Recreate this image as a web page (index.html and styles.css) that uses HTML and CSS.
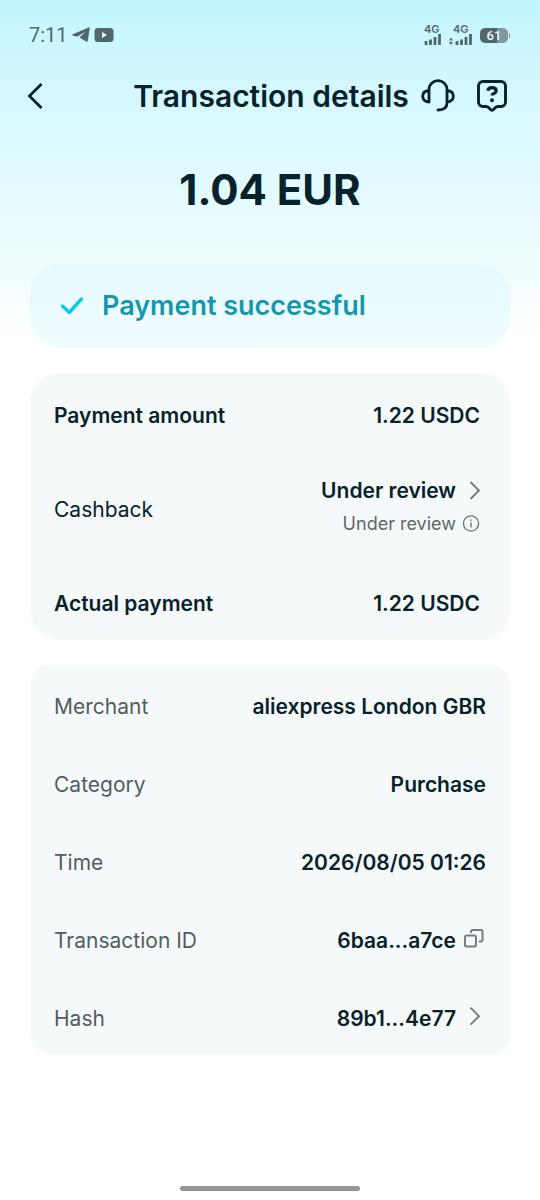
FILE: index.html
```html
<!DOCTYPE html>
<html lang="en">
<head>
  <meta charset="utf-8">
  <meta name="viewport" content="width=device-width, initial-scale=1">
  <title>Transaction details</title>
  <link rel="stylesheet" href="styles.css">
</head>
<body>
  <div class="screen">
    <div class="status">
      <div class="status-group">
        <span class="clock">7:11</span>
        <svg width="18" height="16" viewBox="0 0 18 16" aria-hidden="true"><path d="M16.600.5c.8-.4 1.200 0 1.100.7l-1.900 12.500c-.2 1-.8 1.400-1.600.9L8.300 11c-.5-.3-.5-.8 0-1.300L13.500 4.500 6 9.300c-.6.4-1.200.4-1.800.2L.8 8.500C0 8.200 0 7.600.8 7.200z" fill="#52676c"/></svg>
        <svg width="20" height="14" viewBox="0 0 20 14" aria-hidden="true"><rect width="19" height="14" x=".5" rx="3.500" fill="#52676c"/><path d="m8 4 5 3-5 3z" fill="#dffaff"/></svg>
      </div>
      <div class="status-group status-right">
        <div class="signal">
          <span class="net">4G</span>
          <svg width="17" height="11" viewBox="0 0 17 11" aria-hidden="true"><path d="M2 7v4M6.500 5.500V11M11 3v8M15.500 0v11" stroke="#52676c" stroke-width="2.800"/></svg>
        </div>
        <div class="signal">
          <span class="net">4G</span>
          <svg width="23" height="11" viewBox="0 0 23 11" aria-hidden="true"><path d="m0 6.500 2-3 2 3zM0 8l2 3 2-3z" fill="#52676c"/><path d="M8 7v4M12.500 5.500V11M17 3v8M21.500 0v11" stroke="#52676c" stroke-width="2.800"/></svg>
        </div>
        <div class="battery"><span class="battery-level">61</span></div>
      </div>
    </div>

    <header class="header">
      <div class="side">
        <button class="icon-button" type="button" aria-label="Back">
          <svg width="24" height="30" viewBox="0 0 24 30" fill="none" stroke="#07222a" stroke-width="2.800"><path d="M11.500 3-.5 15l12 12"/></svg>
        </button>
      </div>
      <h1 class="title">Transaction details</h1>
      <div class="side side-right">
        <button class="icon-button" type="button" aria-label="Support">
          <svg width="34" height="34" viewBox="0 0 34 34" fill="none" stroke="#07222a" stroke-width="2.800" stroke-linecap="round" stroke-linejoin="round"><path d="M8 23V10.500a9 8.800 0 0 1 18 0V24c0 4.500-3 7-9 7M8 11.500c-4 .3-6.300 2.500-6.300 5.800S4 22.700 8 23M26 11.500c4 .3 6.300 2.500 6.300 5.800S30 22.700 26 23"/></svg>
        </button>
        <button class="icon-button" type="button" aria-label="Help">
          <svg width="30" height="32" viewBox="0 0 30 32" fill="none" stroke="#07222a" stroke-width="2.900" stroke-linejoin="round" stroke-linecap="round"><path d="M6 1.500h18A4.500 4.500 0 0 1 28.500 6v16a4.500 4.500 0 0 1-4.500 4.500h-3.500c-2.500 0-3.500 3.800-5.500 3.800s-3-3.800-5.500-3.800H6A4.500 4.500 0 0 1 1.500 22V6A4.500 4.500 0 0 1 6 1.500z"/><path d="M10.800 10.800C11.200 8.700 12.800 7.700 15 7.700c2.500 0 4.200 1.200 4.200 3.300 0 2.700-4.200 2.300-4.200 4.600" stroke-linecap="butt" stroke-width="3.200"/><circle cx="15" cy="20.200" r="2" fill="#07222a" stroke="none"/></svg>
        </button>
      </div>
    </header>

    <main class="content">
      <p class="amount">1.04 EUR</p>

      <div class="banner" role="status">
        <svg width="24" height="20" viewBox="0 0 24 20" fill="none" stroke="#10cbe0" stroke-width="3.400" stroke-linecap="round" stroke-linejoin="round" aria-hidden="true"><path d="m2.500 10 6.800 6.500L21.500 3"/></svg>
        <span>Payment successful</span>
      </div>

      <dl class="card card-payment">
        <div class="row strong"><dt>Payment amount</dt><dd>1.22 USDC</dd></div>
        <div class="row row-cashback">
          <dt>Cashback</dt>
          <dd class="stack">
            <button class="link" type="button">Under review
              <svg width="18" height="20" viewBox="0 0 18 20" fill="none" stroke="#6e797c" stroke-width="1.800"><path d="m8.500 1 8.500 8.500L8.500 18"/></svg>
            </button>
            <button class="link note" type="button">Under review
              <svg width="18" height="18" viewBox="0 0 18 18" fill="none" stroke="#6e797c" stroke-width="1.400"><circle cx="9" cy="8.500" r="7.600"/><path d="M9 7.300v5.200M9 4.500V6"/></svg>
            </button>
          </dd>
        </div>
        <div class="row strong"><dt>Actual payment</dt><dd>1.22 USDC</dd></div>
      </dl>

      <dl class="card card-info">
        <div class="row"><dt>Merchant</dt><dd>aliexpress London GBR</dd></div>
        <div class="row"><dt>Category</dt><dd>Purchase</dd></div>
        <div class="row"><dt>Time</dt><dd>2026/08/05 01:26</dd></div>
        <div class="row">
          <dt>Transaction ID</dt>
          <dd><button class="link" type="button">6baa...a7ce
            <svg width="24" height="24" viewBox="0 0 24 24" fill="none" stroke="#748083" stroke-width="2" stroke-linejoin="round"><rect x="3" y="6.500" width="11" height="11" rx="1.800"/><path d="M9 4V2.500A1.500 1.500 0 0 1 10.500 1H19a1.500 1.500 0 0 1 1.500 1.500V11a1.500 1.500 0 0 1-1.500 1.500h-2"/></svg>
          </button></dd>
        </div>
        <div class="row">
          <dt>Hash</dt>
          <dd><button class="link" type="button">89b1...4e77
            <svg width="24" height="24" viewBox="0 0 24 24" fill="none" stroke="#6e797c" stroke-width="1.800"><path d="m8.500.7 8.500 8.500-8.500 8.500"/></svg>
          </button></dd>
        </div>
      </dl>
    </main>

    <div class="home-bar"></div>
  </div>
</body>
</html>
```
FILE: styles.css
```css
* {
  box-sizing: border-box;
}

body {
  margin: 0;
  background: #fff;
  color: #07222a;
  font-family: Inter, "Liberation Sans", sans-serif;
}

button {
  margin: 0;
  padding: 0;
  border: 0;
  background: none;
  color: inherit;
  font: inherit;
  cursor: pointer;
}

svg {
  display: block;
  flex: none;
}

.screen {
  display: flex;
  flex-direction: column;
  min-height: 100vh;
  background: linear-gradient(#c3f6ff 0, #d6f8ff 100px, #e4fbff 200px, #fff 340px);
}

.status {
  display: flex;
  justify-content: space-between;
  align-items: center;
  height: 70px;
  padding: 0 32px 0 29px;
  color: #52676c;
}

.status-group {
  display: flex;
  align-items: center;
  gap: 4px;
}

.status-right {
  gap: 8px;
}

.clock {
  font: 20px/24px Roboto, sans-serif;
}

.signal {
  display: flex;
  flex-direction: column;
  align-items: flex-start;
  gap: 1px;
}

.net {
  font: 600 11px/8px Inter, sans-serif;
}

.signal:nth-child(2) .net {
  padding-left: 4px;
}

.battery {
  display: flex;
  position: relative;
  width: 28px;
  height: 15px;
  border-radius: 5px;
  background: linear-gradient(90deg, #52676c 61%, #83989d 61%);
}

.battery::after {
  content: "";
  position: absolute;
  top: 5px;
  right: -2px;
  width: 1px;
  height: 5px;
  background: #83989d;
}

.battery-level {
  margin: auto;
  color: #e9fcff;
  font: 500 13px/15px Roboto, sans-serif;
}

.header {
  display: grid;
  grid-template-columns: 1fr auto 1fr;
  align-items: center;
  height: 52px;
  padding: 0 28px 0 30px;
}

.side {
  display: flex;
}

.side-right {
  justify-content: flex-end;
  align-items: center;
  gap: 22px;
  padding-right: 5px;
}

.icon-button svg {
  overflow: visible;
}

.title {
  margin: 0;
  font-size: 30px;
  font-weight: 600;
  line-height: 40px;
  white-space: nowrap;
}

.content {
  padding: 0 30px;
}

.amount {
  margin: 40px 0 46px;
  font-size: 42px;
  font-weight: 700;
  line-height: 56px;
  text-align: center;
}

.banner {
  display: flex;
  align-items: center;
  gap: 18px;
  padding: 22px 30px;
  border-radius: 30px;
  background: linear-gradient(#e4faff, #f1fcff);
  color: #1597ad;
  font-size: 27px;
  font-weight: 600;
  line-height: 40px;
}

.card {
  margin: 25px 0 0;
  background: #f5f9fa;
  font-size: 21px;
  line-height: 28px;
}

.row {
  display: flex;
  justify-content: space-between;
  align-items: center;
  gap: 16px;
}

dd {
  margin: 0;
  font-weight: 600;
}

.strong {
  font-weight: 600;
}

.card-payment {
  padding: 29px 30px 22px 24px;
  border-radius: 30px;
}

.row-cashback {
  margin: 47px 0;
}

.stack {
  display: flex;
  flex-direction: column;
  align-items: flex-end;
  gap: 5px;
  padding-bottom: 5px;
}

.link {
  display: flex;
  align-items: center;
  gap: 6px;
}

.note {
  color: #5d676a;
  font-size: 18px;
  font-weight: 400;
}

.card-info {
  display: flex;
  flex-direction: column;
  gap: 50px;
  padding: 28px 24px 21px;
  border-radius: 20px;
}

.card-info dt {
  color: #535d60;
}

.home-bar {
  width: 180px;
  height: 5px;
  margin: auto auto 9px;
  border-radius: 3px;
  background: #969696;
}
```
